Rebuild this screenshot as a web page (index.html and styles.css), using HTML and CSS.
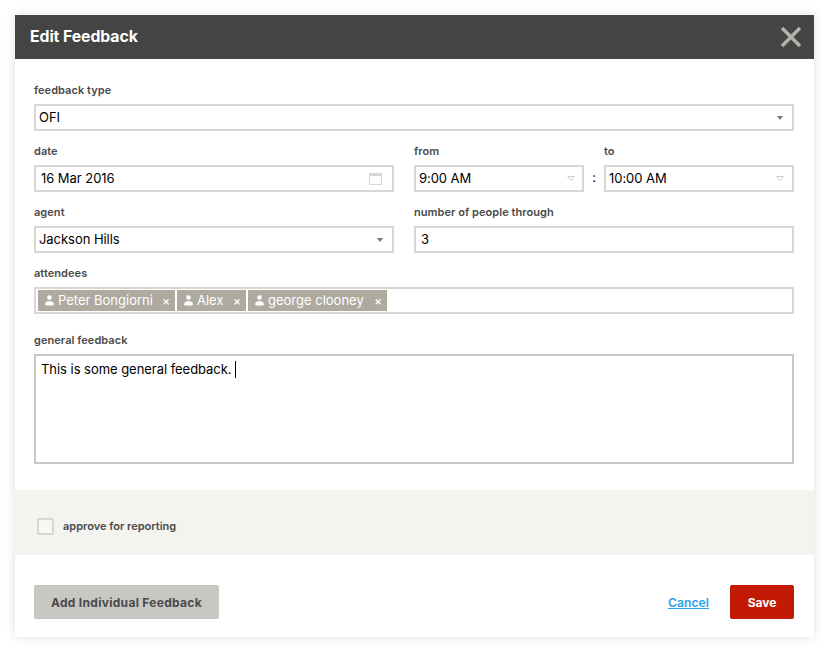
FILE: index.html
```html
<!DOCTYPE html>
<html lang="en">
<head>
<meta charset="utf-8">
<title>Edit Feedback</title>
<link rel="stylesheet" href="styles.css">
</head>
<body>
<div class="modal">
  <header class="head">
    <h1 class="title">Edit Feedback</h1>
    <svg class="close" width="22" height="22" viewBox="0 0 22 22"><path d="M2 2 L20 20 M20 2 L2 20" stroke="#b4b1a8" stroke-width="3.4" fill="none"/></svg>
  </header>
  <div class="form">
    <div class="row">
      <div class="field grow">
        <div class="label">feedback type</div>
        <div class="control tight"><span class="val">OFI</span><span class="caret"></span></div>
      </div>
    </div>
    <div class="row">
      <div class="field half">
        <div class="label">date</div>
        <div class="control"><span class="val">16 Mar 2016</span>
          <svg class="cal" width="13" height="12" viewBox="0 0 13 12"><path d="M0 0H13V12H0Z M1 3V11H12V3Z" fill="#d8d8d2" fill-rule="evenodd"/></svg>
        </div>
      </div>
      <div class="times">
        <div class="field from">
          <div class="label">from</div>
          <div class="control tight"><span class="val">9:00 AM</span><svg class="tri" width="8" height="5" viewBox="0 0 8 5"><path d="M.6.5H7.4L4 4.5Z" fill="none" stroke="#d0d0ca"/></svg></div>
        </div>
        <div class="colon">:</div>
        <div class="field to">
          <div class="label">to</div>
          <div class="control tight"><span class="val">10:00 AM</span><svg class="tri" width="8" height="5" viewBox="0 0 8 5"><path d="M.6.5H7.4L4 4.5Z" fill="none" stroke="#d0d0ca"/></svg></div>
        </div>
      </div>
    </div>
    <div class="row">
      <div class="field half">
        <div class="label">agent</div>
        <div class="control tight"><span class="val">Jackson Hills</span><span class="caret"></span></div>
      </div>
      <div class="field grow">
        <div class="label">number of people through</div>
        <div class="control"><span class="val">3</span></div>
      </div>
    </div>
    <div class="row">
      <div class="field grow">
        <div class="label">attendees</div>
        <div class="control tags">
          <span class="tag t1"><svg class="person" width="9" height="11" viewBox="0 0 9 11"><circle cx="4.5" cy="2.6" r="2.3" fill="#fff"/><path d="M0.3 10.6V8.6C0.3 7 2.6 6 4.5 6S8.7 7 8.7 8.6V10.6Z" fill="#fff"/></svg><span class="tname">Peter Bongiorni</span><span class="x">×</span></span>
          <span class="tag t2"><svg class="person" width="9" height="11" viewBox="0 0 9 11"><circle cx="4.5" cy="2.6" r="2.3" fill="#fff"/><path d="M0.3 10.6V8.6C0.3 7 2.6 6 4.5 6S8.7 7 8.7 8.6V10.6Z" fill="#fff"/></svg><span class="tname">Alex</span><span class="x">×</span></span>
          <span class="tag t3"><svg class="person" width="9" height="11" viewBox="0 0 9 11"><circle cx="4.5" cy="2.6" r="2.3" fill="#fff"/><path d="M0.3 10.6V8.6C0.3 7 2.6 6 4.5 6S8.7 7 8.7 8.6V10.6Z" fill="#fff"/></svg><span class="tname">george clooney</span><span class="x">×</span></span>
        </div>
      </div>
    </div>
    <div class="row last">
      <div class="field grow">
        <div class="label">general feedback</div>
        <div class="area">This is some general feedback. <span class="cursor"></span></div>
      </div>
    </div>
  </div>
  <div class="band">
    <span class="check"></span>
    <span class="approve">approve for reporting</span>
  </div>
  <footer class="foot">
    <button class="btn grey">Add Individual Feedback</button>
    <div class="actions">
      <a class="cancel" href="#">Cancel</a>
      <button class="btn red">Save</button>
    </div>
  </footer>
</div>
</body>
</html>
```
FILE: styles.css
```css
* { box-sizing: border-box; }
html, body { margin: 0; padding: 0; background: #fff; }
body { width: 829px; height: 652px; padding: 15px; font-family: Inter, "Liberation Sans", sans-serif; color: #000; overflow: hidden; }
.modal { width: 799px; height: 622px; background: #fff; box-shadow: 0 0 10px rgba(0,0,0,.13); display: flex; flex-direction: column; }
.head { height: 44px; background: #444; display: flex; align-items: center; justify-content: space-between; padding: 0 12px 0 15px; flex: none; }
.title { margin: 0 0 2px; color: #fff; font-size: 15.8px; font-weight: 700; letter-spacing: -.07px; }
.close { display: block; }
.form { padding: 24px 20px 0 19px; display: flex; flex-direction: column; gap: 13px; }
.row { display: flex; gap: 20px; }
.last { margin-top: 6px; }
.field { display: flex; flex-direction: column; }
.grow { flex: 1; min-width: 0; }
.half { width: 360px; flex: none; }
.label { height: 14px; line-height: 14px; font-size: 11px; font-weight: 600; color: #4a4a4a; margin-bottom: 7px; letter-spacing: .05px; }
.control { height: 27px; border: 2px solid #d8d8d2; display: flex; align-items: center; justify-content: space-between; padding: 0 9px 0 5px; font-size: 13px; background: #fff; }
.val { margin-top: -2px; letter-spacing: -.05px; }
.tight { padding: 0 8px 0 3px; }
.caret { width: 0; height: 0; border-left: 3.5px solid transparent; border-right: 3.5px solid transparent; border-top: 4.5px solid #77777a; margin-right: 1px; }
.cal { display: block; margin-right: 1px; }
.tri { display: block; }
.times { display: flex; flex: 1; }
.from { width: 170px; flex: none; }
.to { width: 190px; flex: none; }
.from .control { padding-right: 7px; }
.to .control { padding-right: 8px; }
.colon { width: 20px; text-align: center; font-size: 13px; padding-top: 23px; line-height: 20px; }
.tags { justify-content: flex-start; gap: 2px; padding: 2px; }
.tag { height: 21px; background: #aeaaa0; color: #fff; display: flex; align-items: center; justify-content: space-between; font-size: 13px; padding: 0 5px 0 7px; }
.t1 { width: 137px; }
.t2 { width: 69px; }
.t3 { width: 139px; }
.person { display: block; flex: none; margin-right: 4px; }
.tname { line-height: 21px; flex: 1; }
.x { font-size: 12px; font-weight: 500; line-height: 21px; }
.area { height: 110px; border: 2px solid #c8c7c0; padding: 4px 5px; font-size: 13px; line-height: 18px; letter-spacing: -.04px; }
.cursor { display: inline-block; width: 1px; height: 17px; background: #000; vertical-align: -4px; margin-left: 0; }
.band { margin-top: 26px; height: 65px; background: #f3f3ef; display: flex; align-items: center; padding: 8px 0 0 22px; flex: none; }
.check { width: 17px; height: 17px; border: 2px solid #d8d8d2; border-radius: 2px; background: #f7f7f4; margin-right: 9px; }
.approve { font-size: 11px; font-weight: 600; color: #4a4a4a; margin-top: -2px; }
.foot { flex: 1; display: flex; justify-content: space-between; padding: 30px 20px 18px 19px; align-items: flex-start; }
.btn { height: 34px; border: 0; border-radius: 2px; font-family: inherit; font-size: 12px; font-weight: 700; padding: 0; }
.grey { width: 185px; background: #c9c7c2; color: #4a4a4a; letter-spacing: .3px; }
.red { width: 64px; background: #c31a05; color: #fff; }
.actions { display: flex; align-items: center; gap: 21px; }
.cancel { color: #2ba0e8; font-size: 12.2px; font-weight: 600; }
```
